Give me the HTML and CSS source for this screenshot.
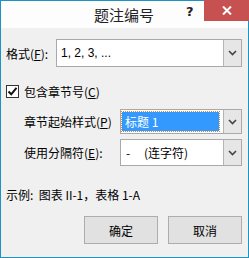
FILE: index.html
```html
<!DOCTYPE html>
<html>
<head>
<meta charset="utf-8">
<link rel="stylesheet" href="styles.css">
</head>
<body>
<div class="window">
  <div class="titlebar">
    <div class="title">题注编号</div>
    <div class="help">?</div>
    <div class="close">
      <svg width="10" height="9" viewBox="0 0 10 9"><path d="M1 0.5 L9 8.5 M9 0.5 L1 8.5" stroke="#fff" stroke-width="2"/></svg>
    </div>
  </div>
  <div class="content">
    <div class="row row-format">
      <span class="label label-format">格式(<u>F</u>):</span>
      <div class="combo combo-format">
        <div class="combo-text">1, 2, 3, ...</div>
        <div class="combo-btn"><svg width="9" height="6" viewBox="0 0 9 6"><path d="M1 1 L4.5 4.5 L8 1" stroke="#444" stroke-width="1.6" fill="none"/></svg></div>
      </div>
    </div>
    <div class="row row-check">
      <span class="checkbox"><svg width="11" height="11" viewBox="0 0 11 11"><path d="M1.5 5.5 L4.2 8.3 L9.5 1.8" stroke="#111" stroke-width="2" fill="none"/></svg></span>
      <span class="label">包含章节号(<u>C</u>)</span>
    </div>
    <div class="row row-sub row-style">
      <span class="label label-sub">章节起始样式(<u>P</u>)</span>
      <div class="combo combo-sub">
        <div class="combo-text"><span class="selected">标题 1</span></div>
        <div class="combo-btn"><svg width="9" height="6" viewBox="0 0 9 6"><path d="M1 1 L4.5 4.5 L8 1" stroke="#444" stroke-width="1.6" fill="none"/></svg></div>
      </div>
    </div>
    <div class="row row-sub row-sep">
      <span class="label label-sub">使用分隔符(<u>E</u>):</span>
      <div class="combo combo-sub combo-sep">
        <div class="combo-text"><span class="dash">-</span>(连字符)</div>
        <div class="combo-btn"><svg width="9" height="6" viewBox="0 0 9 6"><path d="M1 1 L4.5 4.5 L8 1" stroke="#444" stroke-width="1.6" fill="none"/></svg></div>
      </div>
    </div>
    <div class="row row-example">示例:&nbsp; 图表 II-1，表格 1-A</div>
    <div class="row row-buttons">
      <button class="btn">确定</button>
      <button class="btn">取消</button>
    </div>
  </div>
</div>
</body>
</html>
```
FILE: styles.css
```css
html, body {
  margin: 0;
  padding: 0;
  background: #f0f0f0;
}
body {
  font-family: "Noto Sans CJK SC", "Noto Sans", sans-serif;
  font-size: 12px;
  color: #000;
}
.window {
  width: 249px;
  height: 258px;
  box-sizing: border-box;
  border: 1px solid #1b94c3;
  background: #f0f0f0;
  display: flex;
  flex-direction: column;
}
.titlebar {
  position: relative;
  height: 27px;
  background: #fdfdfd;
  flex: none;
}
.title {
  text-align: center;
  font-size: 15px;
  line-height: 27px;
  color: #222;
  padding-right: 1px;
}
.help {
  position: absolute;
  left: 185px;
  top: 2px;
  font-family: "DejaVu Sans", sans-serif;
  font-weight: bold;
  font-size: 13px;
  line-height: 18px;
  color: #222;
}
.close {
  position: absolute;
  right: -1px;
  top: -1px;
  width: 45px;
  height: 21px;
  background: #c75050;
  display: flex;
  align-items: center;
  justify-content: center;
}
.content {
  flex: 1;
  display: flex;
  flex-direction: column;
  padding: 0 6px 0 5px;
}
.row {
  display: flex;
  align-items: center;
}
.label {
  white-space: nowrap;
}
u {
  text-decoration: underline;
  text-underline-offset: 1px;
}
.row-format {
  margin-top: 11px;
  height: 28px;
}
.label-format {
  width: 50px;
  flex: none;
}
.combo {
  display: flex;
  box-sizing: border-box;
  border: 1px solid #a9a9a9;
  background: #fff;
  height: 100%;
}
.combo-format {
  flex: 1;
}
.combo-text {
  flex: 1;
  display: flex;
  align-items: center;
  padding-left: 4px;
  white-space: nowrap;
  font-family: "Liberation Sans", "Noto Sans CJK SC", sans-serif;
}
.combo-btn {
  width: 17px;
  flex: none;
  border-left: 1px solid #b5b5b5;
  background: #e6e6e6;
  display: flex;
  align-items: center;
  justify-content: center;
}
.row-check {
  margin-top: 17px;
  height: 14px;
}
.checkbox {
  width: 11px;
  height: 11px;
  border: 1px solid #333;
  background: #fff;
  margin-right: 5px;
  display: flex;
  align-items: center;
  justify-content: center;
}
.row-sub {
  padding-left: 18px;
}
.row-style {
  margin-top: 11px;
  height: 25px;
}
.row-sep {
  margin-top: 5px;
  height: 27px;
}
.label-sub {
  width: 96px;
  flex: none;
}
.combo-sub {
  width: 122px;
}
.combo-sub .combo-text {
  padding-left: 1px;
}
.selected {
  display: flex;
  align-items: center;
  height: 19px;
  width: 97px;
  padding-left: 3px;
  box-sizing: border-box;
  background: #3399ff;
  color: #fff;
  outline: 1px dotted #d08a3a;
  font-family: "Noto Sans CJK SC", sans-serif;
}
.combo-sep .combo-text {
  padding-left: 5px;
  font-family: "Noto Sans CJK SC", sans-serif;
}
.dash {
  width: 18px;
}
.row-example {
  margin-top: 20px;
  height: 16px;
  white-space: nowrap;
}
.row-buttons {
  margin-top: 14px;
  justify-content: flex-end;
  gap: 10px;
}
.btn {
  width: 74px;
  height: 28px;
  box-sizing: border-box;
  border: 1px solid #adadad;
  background: #e1e1e1;
  font-family: "Noto Sans CJK SC", sans-serif;
  font-size: 12px;
  color: #000;
  padding: 0;
  margin: 0;
}
```
